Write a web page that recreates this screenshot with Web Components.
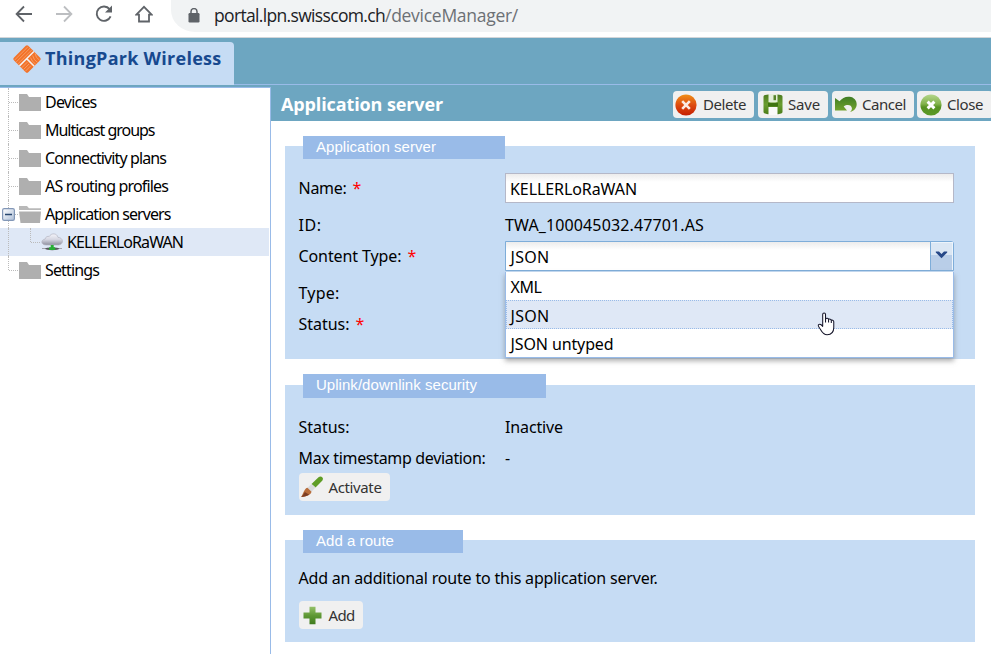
<!DOCTYPE html>
<html lang="en">
<head>
<meta charset="utf-8">
<title>ThingPark Wireless</title>
<style>
html,body{margin:0;height:100%;overflow:hidden;background:#fff}
body{font:16px/20px "Noto Sans","Open Sans",sans-serif;color:#000}
</style>
</head>
<body>
<tp-app></tp-app>
<script>
const define = (name, html, setup) => customElements.define(name, class extends HTMLElement {
  constructor() {
    super();
    const t = document.createElement('template');
    t.innerHTML = html;
    this.attachShadow({mode: 'open'}).append(t.content.cloneNode(true));
  }
  connectedCallback() { if (setup) setup(this, this.shadowRoot); }
});

/* Text run whose tracking is adjusted to fill a given width */
define('tp-text', `<style>:host{display:inline-block;white-space:pre;flex:none}span{display:inline-block}</style><span><slot></slot></span>`, (el, root) => {
  const w = parseFloat(el.getAttribute('w'));
  const span = root.querySelector('span');
  if (!w) return;
  const n = el.textContent.length;
  el.style.width = w + 'px';
  span.style.letterSpacing = ((w - span.getBoundingClientRect().width) / n) + 'px';
});

const icons = {
 back:`<svg width="18" height="18" viewBox="0 0 18 18" fill="none" stroke="#5f6368" stroke-width="1.8"><path d="M17 9H2M9 1.5 1.6 9 9 16.5"/></svg>`,
 forward:`<svg width="18" height="18" viewBox="0 0 18 18" fill="none" stroke="#bcbec1" stroke-width="1.8"><path d="M1 9h15M9 1.5 16.4 9 9 16.5"/></svg>`,
 reload:`<svg width="18" height="18" viewBox="0 0 18 18"><path d="M15.6 11.4A7.2 7.2 0 1 1 14.6 4.2" fill="none" stroke="#5f6368" stroke-width="1.9"/><path d="M17 .6v7h-7z" fill="#5f6368"/></svg>`,
 home:`<svg width="18" height="18" viewBox="0 0 18 18" fill="none" stroke="#5f6368" stroke-width="1.8"><path d="M1.3 9.6H4V16.5h10V9.6h2.7L9 1.8z"/></svg>`,
 lock:`<svg width="12" height="15" viewBox="0 0 12 15"><rect x=".5" y="5" width="11" height="9.5" rx="1.2" fill="#5f6368"/><path d="M3 6V3.6a3 3 0 0 1 6 0V6" fill="none" stroke="#5f6368" stroke-width="1.5"/></svg>`,
 logo:`<svg width="30" height="30" viewBox="0 0 30 30"><g transform="translate(15 15) rotate(45)"><rect x="-10.2" y="-10.2" width="20.4" height="20.4" rx="1.8" fill="#f2732a"/><g stroke="#f9a878" stroke-width=".7" fill="none"><path d="M-8-9.500V9.500M-5.500-10V10M-3-10V10M2-9.500Q5-7 10-8M1.500-6.500Q5-4 10-5M1.500-3.500Q5-1.500 10-2.500M2.500 2v8M5 2v8M7.500 2v8"/></g><path d="M-.5-10.200V10.200M-.5 0H10.200" stroke="#f4efee" stroke-width="1.500" fill="none"/></g></svg>`,
 folder:`<svg width="22" height="17" viewBox="0 0 22 17"><path d="M0 0h8l2 3h12v14H0z" fill="#afafaf"/></svg>`,
 open:`<svg width="22" height="17" viewBox="0 0 22 17"><path d="M0 0h8l2 2.3h12V4H0z" fill="#b9b9b9"/><path d="M0 5.5h22L21 17H1.5z" fill="#afafaf"/></svg>`,
 cloud:`<svg width="23" height="18" viewBox="0 0 23 18"><defs><linearGradient id="c" x2="0" y2="1"><stop stop-color="#f4f4fa"/><stop offset=".5" stop-color="#d6d7e2"/><stop offset="1" stop-color="#8f909e"/></linearGradient></defs><path d="M5 12C-.5 12-.2 6.500 4 6.200 4.600 3.500 7 3 8.200 3.500 10.200-.2 16-.1 17 4.400c5.400 0 6.200 6.900.8 7.600z" fill="url(#c)" stroke="#b3b4c2" stroke-width=".7"/><path d="M1 15.500h20" stroke="#a3a3aa" stroke-width="1"/><ellipse cx="11.200" cy="15.800" rx="7" ry="1.400" fill="#55585b"/><path d="M9.700 12h3v2.200h1.500v2.800h-6v-2.800h1.500z" fill="#27ae34"/></svg>`,
 toggle:`<svg width="13" height="13" viewBox="0 0 13 13"><defs><linearGradient id="m" x2="1" y2="1"><stop stop-color="#fff"/><stop offset="1" stop-color="#aebfd8"/></linearGradient></defs><rect x=".6" y=".6" width="11.8" height="11.8" rx="1.6" fill="url(#m)" stroke="#8297b7" stroke-width="1.2"/><path d="M3 6.5h7" stroke="#27466f" stroke-width="1.5"/></svg>`,
 del:`<svg width="22" height="22" viewBox="0 0 22 22"><defs><linearGradient id="r" x2="0" y2="1"><stop stop-color="#f09018"/><stop offset=".5" stop-color="#dd4b10"/><stop offset="1" stop-color="#c51d00"/></linearGradient></defs><circle cx="11" cy="11" r="10.6" fill="url(#r)"/><path d="m7.2 7.2 7.6 7.6m0-7.6-7.6 7.6" stroke="#fbece4" stroke-width="2.6"/></svg>`,
 save:`<svg width="20" height="21" viewBox="0 0 20 21"><defs><linearGradient id="s" x2="0" y2="1"><stop stop-color="#4d7c20"/><stop offset=".5" stop-color="#6a9d30"/><stop offset="1" stop-color="#4a7d1a"/></linearGradient></defs><path d="M.5 2.500Q.6 1.200 2 1l3.500-.4h9L18 1q1.400.2 1.500 1.500v15.500q-.1 1.400-1.500 1.600l-3 .6h-10l-3-.6Q.6 19.400.5 18z" fill="url(#s)"/><path d="M5.500 0h9v8q-4.500 1-9 0z" fill="#e4efda"/><path d="M10.500 1.200h2.500v5h-2.500z" fill="#568429"/><path d="M5 9h10v3.500H5z" fill="#3f7412"/><path d="M5.500 13h9v8h-9z" fill="#f9f9f9"/></svg>`,
 undo:`<svg width="22" height="17" viewBox="0 0 22 17"><defs><linearGradient id="u" x2="0" y2="1"><stop stop-color="#3f7c25"/><stop offset="1" stop-color="#78a72f"/></linearGradient></defs><path d="M0 2v12.500h12L8.700 10.500c3.500-2.600 8-1.600 8.200 1.800.1 1.500-.7 2.700-1.900 3.700C24.500 13.500 23.500 1.600 14.500.7 10.500.3 7 2 4.500 5.300z" fill="url(#u)"/></svg>`,
 close:`<svg width="22" height="22" viewBox="0 0 22 22"><defs><linearGradient id="g" x2="0" y2="1"><stop stop-color="#b4d68c"/><stop offset=".45" stop-color="#83b34c"/><stop offset=".6" stop-color="#579222"/><stop offset="1" stop-color="#5b9a26"/></linearGradient></defs><circle cx="11" cy="11" r="10.600" fill="url(#g)"/><path d="m7.600 7.600 6.800 6.800m0-6.800-6.800 6.800" stroke="#fff" stroke-width="2.900"/></svg>`,
 brush:`<svg width="22" height="22" viewBox="0 0 22 22"><path d="M10.500 8 17.500 1.300C20-1 23.500 2 21.200 4.700L14.500 11.500z" fill="#5f9d26"/><path d="m6.500 11.800 4-3.800 4 3.500-4 4.200z" fill="#d9dadd"/><path d="M6.500 11.800c-3 .6-3.500 4.300-6.300 9.200 4.800-.8 9.600-1.700 10.300-5.300z" fill="#b86d3b"/><path d="M.2 21c3-.5 6-1.100 8-2.300L3.800 16c-.8 1.500-1.700 3.300-3.600 5z" fill="#7c3d24"/></svg>`,
 plus:`<svg width="19" height="19" viewBox="0 0 19 19"><defs><linearGradient id="p" x2="0" y2="1"><stop stop-color="#94c068"/><stop offset=".5" stop-color="#5f9835"/><stop offset="1" stop-color="#3f7b1d"/></linearGradient></defs><path d="M6.500.8h6v5.700h6v6h-6v5.700h-6v-5.700h-6v-6h6z" fill="url(#p)"/></svg>`,
 chevron:`<svg width="13" height="8" viewBox="0 0 13 8"><path d="M.8.500H4L6.500 3 9 .500h3.200v1L6.500 7.200.8 1.500z" fill="#264888"/></svg>`,
 hand:`<svg width="18" height="24" viewBox="0 0 19 25"><path d="M6 14V2.600C6 .2 9 .2 9 2.600V7c1-1 3-.6 3.200.7 1-.8 2.700-.4 2.900.9 1.200-.6 2.600.2 2.600 1.600V16c0 4-2 7.800-7 7.800-4 0-5.300-2.500-7-5.500-1.200-2.100-3.400-4.200-2-5.200C3 12.200 4.700 13 6 15z" fill="#fff" stroke="#15152a" stroke-width="1.100" stroke-linejoin="round"/><path d="M9 6.500V11M12.200 7.500V11M15.100 8.500V11.500" stroke="#15152a" stroke-width="1.100"/></svg>`
};
define('tp-icon', `<style>:host{display:inline-flex;flex:none}svg{display:block}</style>`, (el, root) => {
  if (!root.querySelector('svg')) root.innerHTML += icons[el.getAttribute('name')];
});

define('tp-browser-bar', `<style>
:host{display:flex;align-items:flex-start;height:37px;border-bottom:1px solid #d3d6d9;background:#fff;box-sizing:content-box}
nav{display:flex;gap:22px;padding:5px 0 0 15px;width:156px;box-sizing:content-box}
.url{flex:1;display:flex;height:32px;background:#f1f3f4;border-radius:0 0 0 24px/0 0 0 22px;padding-left:17px;box-sizing:border-box}
.url tp-icon{margin:8px 14px 0 0}.t{font:17.5px/24px "Open Sans","Noto Sans",sans-serif;padding-top:3px;color:#202124;display:flex}.p{color:#6c7075}
</style><nav><tp-icon name="back"></tp-icon><tp-icon name="forward"></tp-icon><tp-icon name="reload"></tp-icon><tp-icon name="home"></tp-icon></nav>
<div class="url"><tp-icon name="lock"></tp-icon><div class="t"><tp-text w="171">portal.lpn.swisscom.ch</tp-text><tp-text class="p" w="133">/deviceManager/</tp-text></div></div>`);

define('tp-header', `<style>
:host{display:block;height:49px;background:#6da6c1;box-sizing:border-box;padding-top:4px}
.row{height:43px;box-sizing:border-box;border-bottom:1px solid #99bbe8;display:flex}
.brand{display:flex;width:234px;height:43px;background:#c6dcf4;border-radius:0 4px 0 0;box-sizing:border-box;padding-left:12px}
.brand tp-icon{margin-top:2px}.brand tp-text{margin:4px 0 0 3px;font:bold 18px/24px "Open Sans","Noto Sans",sans-serif;color:#17498f}
</style><div class="row"><div class="brand"><tp-icon name="logo"></tp-icon><tp-text w="176.500">ThingPark Wireless</tp-text></div></div>`);

define('tp-node', `<style>
:host{display:flex;align-items:center;height:28px;position:relative;padding-left:19px;width:269px;box-sizing:border-box}
:host([selected]){background:#dfe8f6;padding-left:41px}
.v,.h,.tog,.b{position:absolute}
.v{left:8px;top:0;height:28px;border-left:1px dotted #bbb}.h{left:9px;top:14px;width:9px;border-top:1px dotted #bbb}
:host([last]) .v{height:14px}:host([selected]) .h{left:31px}
.b{display:none;left:30px;top:0;height:14px;border-left:1px dotted #bbb}:host([selected]) .b{display:block}
.tog{display:none;left:2px;top:8px}:host([expanded]) .tog{display:block}
.l{display:flex;padding-bottom:1px}
</style><i class="v"></i><i class="h"></i><i class="b"></i><tp-icon class="tog" name="toggle"></tp-icon><slot name="icon"></slot><div class="l"><slot></slot></div>`);

define('tp-tree', `<style>
:host{display:block;width:270px;border-right:1px solid #99bbe8;border-top:1px solid #99bbe8;background:#fff;flex:none}
tp-icon{margin-right:4px}tp-node[selected] tp-icon{margin-right:3px}
</style>
<tp-node><tp-icon slot="icon" name="folder"></tp-icon><tp-text w="51.500">Devices</tp-text></tp-node>
<tp-node><tp-icon slot="icon" name="folder"></tp-icon><tp-text w="109.500">Multicast groups</tp-text></tp-node>
<tp-node><tp-icon slot="icon" name="folder"></tp-icon><tp-text w="121">Connectivity plans</tp-text></tp-node>
<tp-node><tp-icon slot="icon" name="folder"></tp-icon><tp-text w="123">AS routing profiles</tp-text></tp-node>
<tp-node expanded><tp-icon slot="icon" name="open"></tp-icon><tp-text w="125.500">Application servers</tp-text></tp-node>
<tp-node selected><tp-icon slot="icon" name="cloud"></tp-icon><tp-text w="116">KELLERLoRaWAN</tp-text></tp-node>
<tp-node last><tp-icon slot="icon" name="folder"></tp-icon><tp-text w="54">Settings</tp-text></tp-node>`);

define('tp-button', `<style>
:host{display:inline-flex;align-items:center;height:27px;background:#f0f0f0;border-radius:4px;box-sizing:border-box;padding-left:2px;color:#333;font:15px/20px "Noto Sans","Open Sans",sans-serif}
div{width:28px;display:flex}
.l{width:auto;padding-bottom:var(--drop,0)}
</style><div><slot name="icon"></slot></div><div class="l"><slot></slot></div>`);

define('tp-toolbar', `<style>
:host{display:flex;height:34px;background:#6da6c1;padding-left:10px;color:#fff;align-items:flex-start;--drop:2px}
h1{margin:5px 0 0;font:bold 18px/24px "Open Sans","Noto Sans",sans-serif;width:392px;flex:none}
.b{display:flex;flex:none;gap:4px;padding-top:4px}.b tp-button{flex:none}.b tp-button:last-child{margin-left:-1px}
</style><h1><tp-text w="162">Application server</tp-text></h1><div class="b">
<tp-button style="width:81px"><tp-icon slot="icon" name="del"></tp-icon><tp-text w="43">Delete</tp-text></tp-button>
<tp-button style="width:70px"><tp-icon slot="icon" name="save" style="margin-left:3px"></tp-icon><tp-text w="32">Save</tp-text></tp-button>
<tp-button style="width:82px"><tp-icon slot="icon" name="undo" style="margin-left:1px"></tp-icon><tp-text w="44">Cancel</tp-text></tp-button>
<tp-button style="width:76px"><tp-icon slot="icon" name="close" style="margin-left:1px"></tp-icon><tp-text w="36">Close</tp-text></tp-button></div>`);

define('tp-fieldset', `<style>
:host{display:flex;flex-direction:column;background:#c6dcf4;width:690px;box-sizing:border-box;padding:0 21px 0 13.500px}
.l{width:var(--lw);height:var(--lh,23px);margin:var(--lt,-10px) 0 0 4.500px;padding-left:13px;box-sizing:border-box;background:#99bbe8;color:#fff;font:15px/22px "Liberation Sans",Arial,sans-serif}
</style><div class="l"><slot name="legend"></slot></div><slot></slot>`);

define('tp-row', `<style>
:host{display:grid;grid-template-columns:206.500px 449px;height:30px;align-items:center}
.l{display:flex;gap:6px}:host([required]) .l::after{content:"*";color:#f00;font:16px/20px "Noto Sans",sans-serif}
</style><div class="l"><slot name="label"></slot></div><slot></slot>`);

define('tp-input', `<style>
:host{display:flex;align-items:center;height:30px;width:449px;box-sizing:border-box;border:1px solid #b5b8c8;background:linear-gradient(#ececec,#fff 8px);padding-left:4px;padding-top:1px}
</style><slot></slot>`);

define('tp-combo', `<style>
:host{display:block;position:relative;width:449px;height:30px}
.f{display:flex;align-items:center;justify-content:space-between;height:30px;box-sizing:border-box;border:1px solid #7eadd9;border-radius:0 3px 0 0;background:linear-gradient(#ececec,#fff 8px);padding-left:4.500px}
.f>tp-text{margin-top:1px}
.a{height:28px;width:23px;box-sizing:border-box;border-left:1px solid #7eadd9;background:linear-gradient(#dbe7f4 0 13px,#b9cee8 13px);box-shadow:inset -1px 1px #edf4fb;display:flex;padding:9px 0 0 4px}
.menu{position:absolute;z-index:2;left:0;top:31px;width:449px;height:86px;box-sizing:border-box;border:1px solid #99bbe8;border-top:0;background:#fff;box-shadow:0 3px 5px #7779}
.o{height:28px;box-sizing:border-box;padding:5px 0 0 4.500px;line-height:21px}
.o.s{height:29px;background:#dfe8f6;border:1px dotted #99bbe8;padding:5px 0 0 3.500px}
.hand{position:absolute;left:311px;top:40px}
</style><div class="f"><tp-text w="39">JSON</tp-text><div class="a"><tp-icon name="chevron"></tp-icon></div></div>
<div class="menu"><div class="o"><tp-text w="31">XML</tp-text></div><div class="o s"><tp-text w="39">JSON</tp-text></div><div class="o"><tp-text w="103">JSON untyped</tp-text></div><tp-icon class="hand" name="hand"></tp-icon></div>`);

define('tp-app', `<style>
:host{display:block;height:654px;overflow:hidden}
main{display:flex;height:567px}
.r{flex:1;min-width:0}
.c{display:flex;flex-direction:column;padding:25px 0 0 14px}
tp-tree{height:566px}
tp-button{height:28px}
</style><tp-browser-bar></tp-browser-bar><tp-header></tp-header><main><tp-tree></tp-tree><div class="r"><tp-toolbar></tp-toolbar><div class="c">
<tp-fieldset style="height:213px;--lw:202px"><tp-text slot="legend" w="120">Application server</tp-text>
<tp-row required style="margin-top:14px"><tp-text slot="label" w="48">Name:</tp-text><tp-input><tp-text w="127">KELLERLoRaWAN</tp-text></tp-input></tp-row>
<tp-row style="margin-top:7px"><tp-text slot="label" w="23">ID:</tp-text><tp-text w="199">TWA_100045032.47701.AS</tp-text></tp-row>
<tp-row required style="margin-top:1px"><tp-text slot="label" w="103">Content Type:</tp-text><tp-combo></tp-combo></tp-row>
<tp-row style="margin-top:7px"><tp-text slot="label" w="41">Type:</tp-text></tp-row>
<tp-row required style="margin-top:1px"><tp-text slot="label" w="51">Status:</tp-text></tp-row></tp-fieldset>
<tp-fieldset style="height:130px;margin-top:26px;--lw:243px;--lh:24px;--lt:-11px"><tp-text slot="legend" w="161">Uplink/downlink security</tp-text>
<tp-row style="margin-top:14px"><tp-text slot="label" w="51">Status:</tp-text><tp-text w="58">Inactive</tp-text></tp-row>
<tp-row style="margin-top:1px"><tp-text slot="label" w="187">Max timestamp deviation:</tp-text><tp-text>-</tp-text></tp-row>
<tp-button style="width:91px"><tp-icon slot="icon" name="brush"></tp-icon><tp-text w="53">Activate</tp-text></tp-button></tp-fieldset>
<tp-fieldset style="height:102px;margin-top:25px;--lw:160px"><tp-text slot="legend" w="78">Add a route</tp-text>
<tp-row style="margin-top:10px"><tp-text slot="label" w="359">Add an additional route to this application server.</tp-text></tp-row>
<tp-button style="width:64px;margin-top:8px"><tp-icon slot="icon" name="plus" style="margin-left:2px"></tp-icon><tp-text w="26">Add</tp-text></tp-button></tp-fieldset>
</div></div></main>`);
</script>
</body>
</html>
